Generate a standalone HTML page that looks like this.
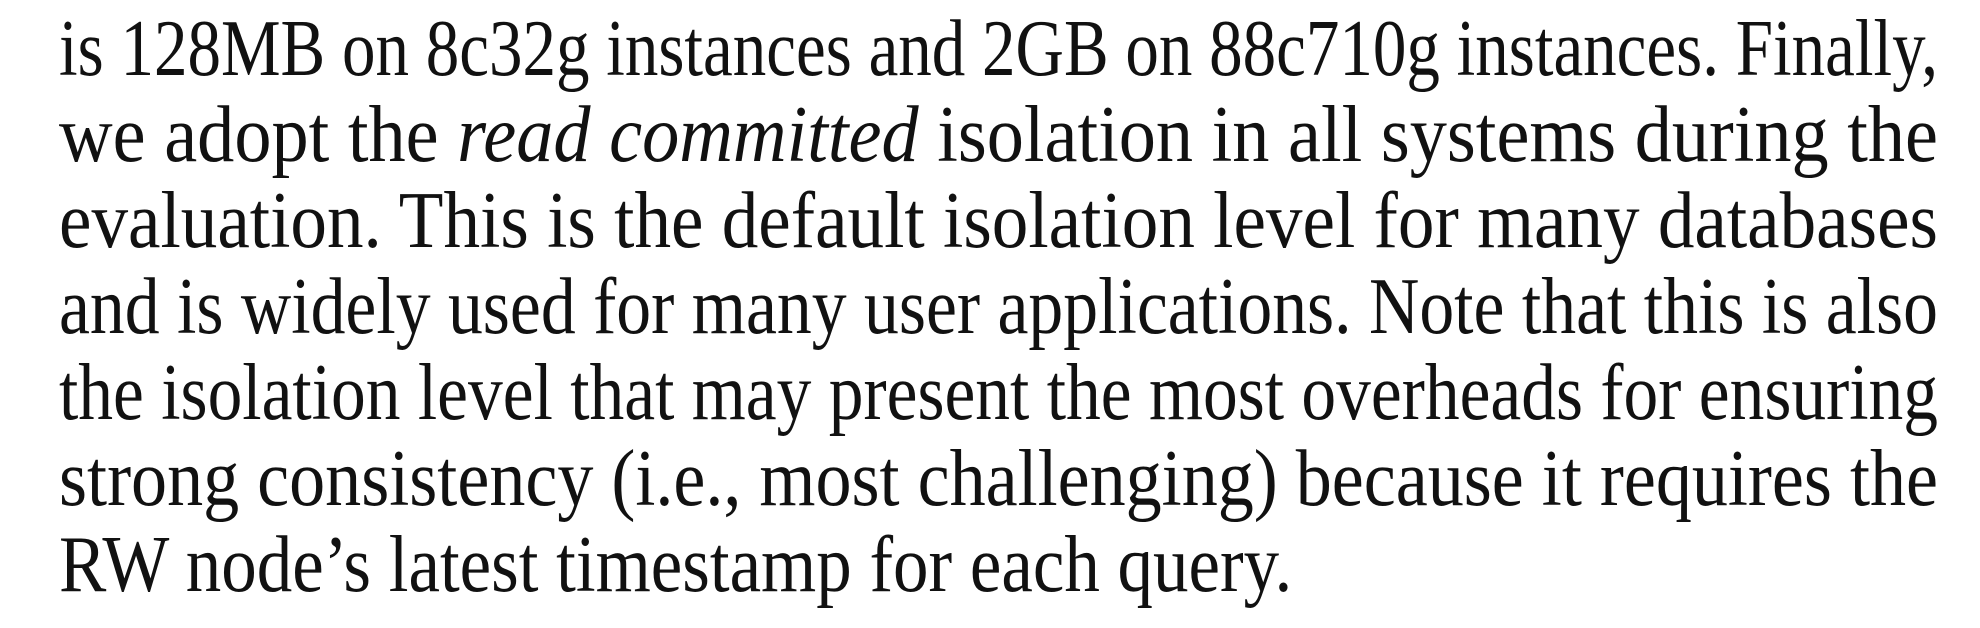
<!DOCTYPE html>
<html><head><meta charset="utf-8">
<style>
html,body{margin:0;padding:0;background:#fff;}
body{width:1980px;height:628px;overflow:hidden;position:relative;}
.l{position:absolute;left:59px;white-space:nowrap;font-family:"Liberation Serif",serif;font-size:80px;line-height:86px;color:#111;transform-origin:0 0;}
</style></head><body>
<div class="l" style="top:6px" data-f="1">is 128MB on 8c32g instances and 2GB on 88c710g instances. Finally,</div>
<div class="l" style="top:92px" data-f="1">we adopt the <i>read committed</i> isolation in all systems during the</div>
<div class="l" style="top:178px" data-f="1">evaluation. This is the default isolation level for many databases</div>
<div class="l" style="top:264px" data-f="1">and is widely used for many user applications. Note that this is also</div>
<div class="l" style="top:350px" data-f="1">the isolation level that may present the most overheads for ensuring</div>
<div class="l" style="top:436px" data-f="1">strong consistency (i.e., most challenging) because it requires the</div>
<div class="l" style="top:522px" data-f="0">RW node’s latest timestamp for each query.</div>
<script>
(function(){
  var W=1879;
  var ls=document.querySelectorAll('.l');
  var scales=[];
  ls.forEach(function(el){
    var w=el.getBoundingClientRect().width;
    if(el.getAttribute('data-f')==='1'){var s=W/w;scales.push(s);el.style.transform='scaleX('+s+')';}
  });
  var avg=scales.reduce(function(a,b){return a+b;},0)/scales.length;
  ls.forEach(function(el){if(el.getAttribute('data-f')==='0'){el.style.transform='scaleX('+avg+')';}});
})();
</script>
</body></html>
